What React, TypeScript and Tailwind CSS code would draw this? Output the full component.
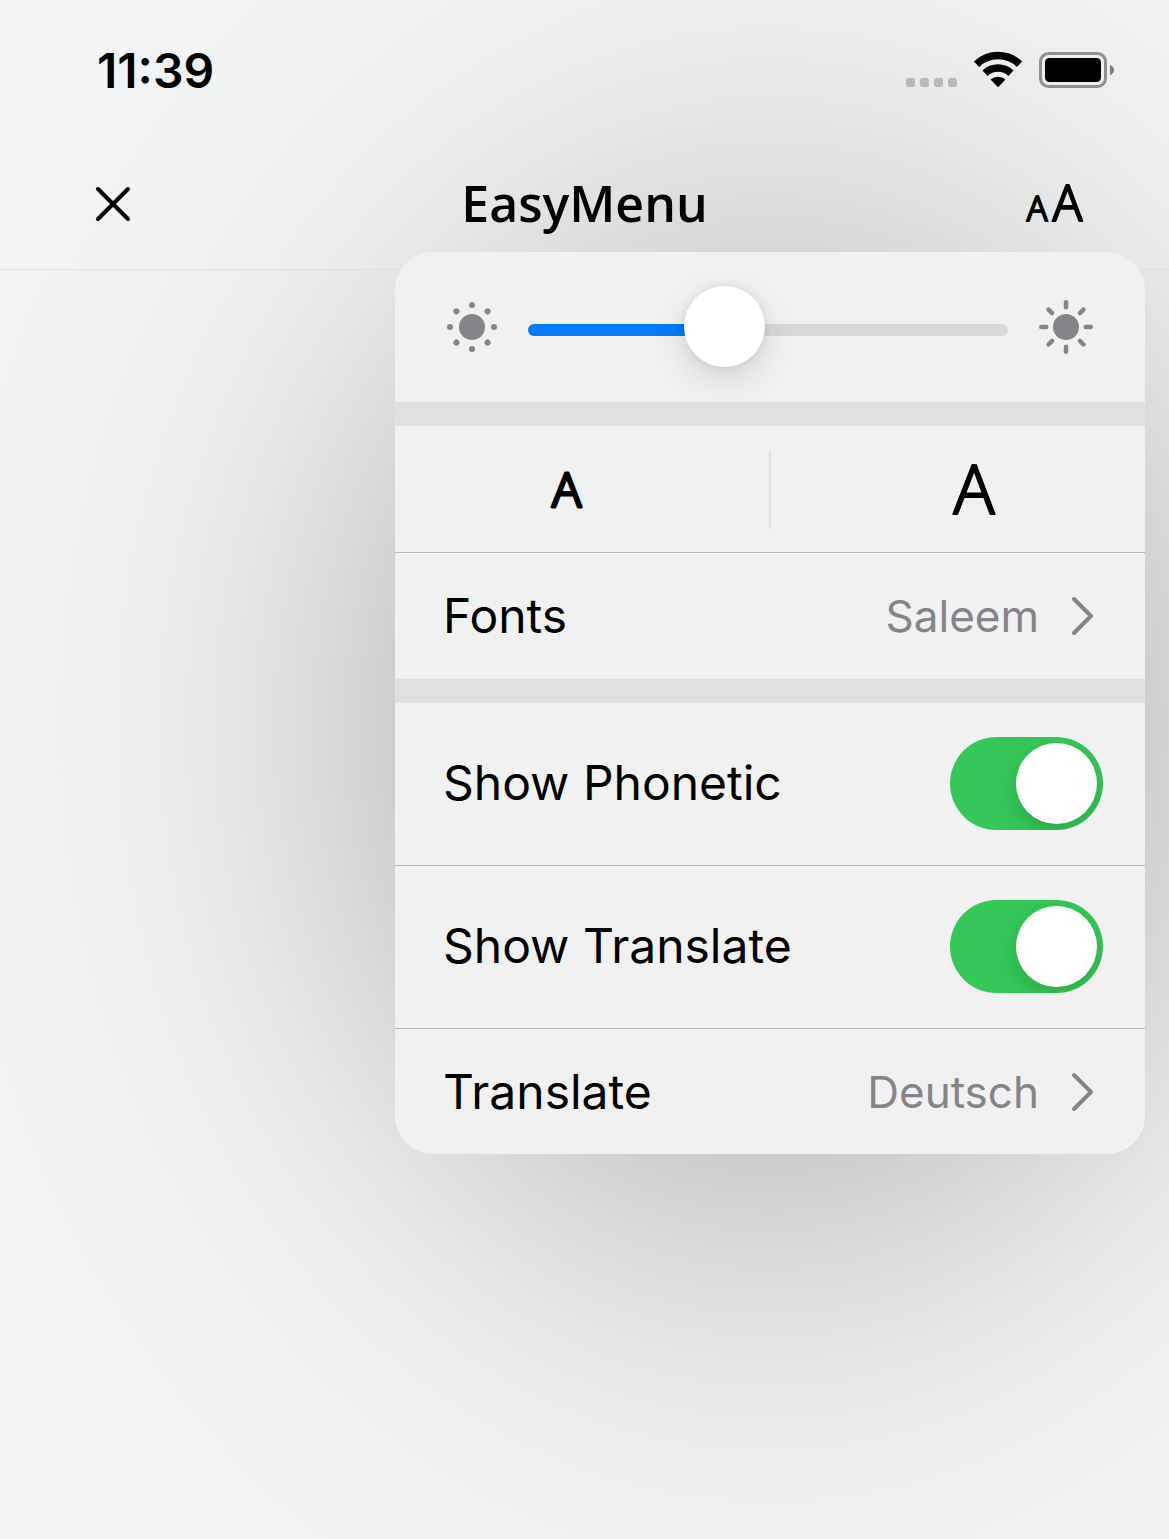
import { useState } from "react";
import type { CSSProperties } from "react";

function StatusIcons() {
  return (
    <div className="flex items-center" aria-hidden="true">
      <svg width="210" height="40" viewBox="0 0 210 40">
        <g fill="#b8b9bb">
          <rect x="1" y="28" width="9" height="9" rx="2.5" />
          <rect x="15" y="28" width="9" height="9" rx="2.5" />
          <rect x="29" y="28" width="9" height="9" rx="2.5" />
          <rect x="43" y="28" width="9" height="9" rx="2.5" />
        </g>
        <g fill="none" stroke="#000" strokeWidth="7.500">
          <path d="M71.5 14.2 A31 31 0 0 1 114.500 14.2" />
          <path d="M80 23.200 A19 19 0 0 1 106 23.200" />
        </g>
        <path d="M85.500 29.500 A10 8 0 0 1 100.500 29.500 L94 36.300 Q93 37.300 92 36.300 Z" fill="#000" />
        <rect x="135.500" y="3.500" width="65" height="33" rx="8" fill="none" stroke="#8f8f91" strokeWidth="3" />
        <rect x="140" y="8" width="56" height="24" rx="4.500" fill="#000" />
        <path d="M205 15 Q209 16.500 209 20 Q209 23.500 205 25 Z" fill="#7d7d7f" />
      </svg>
    </div>
  );
}

const RAY_ANGLES = [0, 45, 90, 135, 180, 225, 270, 315];

function DimSun() {
  return (
    <svg className="shrink-0" width="56" height="56" viewBox="-28 -28 56 56" fill="#858489" aria-hidden="true">
      <circle r="13" />
      {RAY_ANGLES.map((a) => (
        <circle key={a} cy="-22" r="3" transform={`rotate(${a})`} />
      ))}
    </svg>
  );
}

function BrightSun() {
  return (
    <svg className="shrink-0" width="56" height="56" viewBox="-28 -28 56 56" fill="#858489" aria-hidden="true">
      <circle r="13" />
      {RAY_ANGLES.map((a) => (
        <rect key={a} x="-2.200" y="-27" width="4.400" height="9.500" rx="2.200" transform={`rotate(${a})`} />
      ))}
    </svg>
  );
}

function Chevron() {
  return (
    <svg className="shrink-0" width="24" height="40" viewBox="0 0 24 40" fill="none" stroke="#858489" strokeWidth="4" strokeLinecap="round" strokeLinejoin="round" aria-hidden="true">
      <path d="M3 3 L20 20 L3 37" />
    </svg>
  );
}

/* A letter with softened corners; the box spans from cap height to baseline. */
function SizeLetter({ size, stroke }: { size: number; stroke: number }) {
  const width = Math.round(size * 0.64);
  const height = Math.round(size * 0.72);
  return (
    <svg className="overflow-visible" width={width} height={height} viewBox={`0 0 ${width} ${height}`} aria-hidden="true">
      <text
        x={width / 2}
        y={height}
        textAnchor="middle"
        fontFamily="'Noto Sans', sans-serif"
        fontWeight="300"
        fontSize={size}
        stroke="#000"
        strokeWidth={stroke}
        strokeLinejoin="round"
      >
        A
      </text>
    </svg>
  );
}

function Toggle({ id, label, checked, onChange }: { id: string; label: string; checked: boolean; onChange: (v: boolean) => void }) {
  return (
    <div className="flex h-[163px] items-center justify-between border-b border-[#b9b9bd] pr-[42px] pb-0.5 pl-12">
      <label htmlFor={id} className="text-[48px]">
        {label}
      </label>
      <input
        id={id}
        type="checkbox"
        role="switch"
        checked={checked}
        onChange={(e) => onChange(e.target.checked)}
        className="h-[93px] w-[153px] shrink-0 cursor-pointer appearance-none overflow-hidden rounded-full bg-[#d9d9dc] p-1.5 before:block before:size-[81px] before:rounded-full before:bg-white before:shadow-[0_8px_22px_rgba(0,0,0,0.16)] checked:bg-[#35c759] checked:before:ml-auto"
      />
    </div>
  );
}

function LinkRow({ label, value, className }: { label: string; value: string; className: string }) {
  return (
    <button type="button" className={`flex w-full items-center justify-between pr-[50px] pl-12 text-left ${className}`}>
      <span className="text-[48px]">{label}</span>
      <span className="flex items-center gap-8">
        <span className="text-[44px] text-[#858489]">{value}</span>
        <Chevron />
      </span>
    </button>
  );
}

export default function App() {
  const [brightness, setBrightness] = useState(39);
  const [phonetic, setPhonetic] = useState(true);
  const [translate, setTranslate] = useState(true);
  const fill = { "--fill": `calc(40px + (100% - 81px) * ${brightness / 100})` } as CSSProperties;

  return (
    <div className="relative min-h-screen overflow-hidden bg-[#f4f5f7] bg-[radial-gradient(800px_950px_at_calc(100%-399px)_725px,#c9c9ca_43%,#cfcfd0_47%,#dadbdc_57%,#e6e6e7_68%,#ecedee_78%,#f0f1f2_90%,#f4f5f7_115%)] font-['Inter',sans-serif] text-black">
      <header className="border-b border-[#d9dadc]/70 bg-[#f4f5f7]/15">
        <div className="flex h-[138px] items-center justify-between pt-0.5 pr-[54px] pl-[97px]">
          <time className="pt-0.5 text-[48px] font-semibold">11:39</time>
          <StatusIcons />
        </div>
        <div className="grid h-[131px] grid-cols-[1fr_auto_1fr] items-center px-[86px]">
          <button type="button" aria-label="Close" className="justify-self-start pl-[9px]">
            <svg width="36" height="36" viewBox="0 0 36 36" fill="none" stroke="#000" strokeWidth="4" strokeLinecap="round">
              <path d="M3 3 L33 33 M33 3 L3 33" />
            </svg>
          </button>
          <h1 className="font-['Open_Sans',sans-serif] text-[50px] font-semibold">EasyMenu</h1>
          <button type="button" aria-label="Text settings" className="flex items-end gap-1 justify-self-end">
            <SizeLetter size={34} stroke={2} />
            <SizeLetter size={49} stroke={2} />
          </button>
        </div>
      </header>

      <section aria-label="Reading settings" className="absolute top-[252px] right-6 w-[750px] overflow-hidden rounded-[38px] bg-[#f1f1f2]">
        <div className="flex h-[150px] items-center gap-7 px-[49px]">
          <DimSun />
          <input
            type="range"
            aria-label="Brightness"
            min={0}
            max={100}
            value={brightness}
            onChange={(e) => setBrightness(Number(e.target.value))}
            style={fill}
            className="mt-1.5 mr-0.5 h-3 min-w-0 flex-1 cursor-pointer appearance-none rounded-full bg-[linear-gradient(to_right,#007aff_var(--fill),#d8d8db_var(--fill))] [&::-webkit-slider-thumb]:relative [&::-webkit-slider-thumb]:-top-1 [&::-webkit-slider-thumb]:size-[81px] [&::-webkit-slider-thumb]:appearance-none [&::-webkit-slider-thumb]:rounded-full [&::-webkit-slider-thumb]:bg-white [&::-webkit-slider-thumb]:shadow-[0_12px_36px_rgba(0,0,0,0.12),0_1px_10px_rgba(0,0,0,0.1)]"
          />
          <div className="-mr-0.5 pr-1">
            <BrightSun />
          </div>
        </div>
        <div className="h-6 bg-[#e0e0e0]" />
        <div className="flex h-[127px] items-center border-b border-[#b9b9bd]">
          <button type="button" aria-label="Smaller text" className="flex flex-1 items-center justify-center pr-8">
            <SizeLetter size={48} stroke={3} />
          </button>
          <div className="h-[79px] w-0.5 bg-[#e0e0e1]" />
          <button type="button" aria-label="Larger text" className="flex flex-1 items-center justify-center pl-8">
            <SizeLetter size={68} stroke={2} />
          </button>
        </div>
        <LinkRow label="Fonts" value="Saleem" className="h-[126px]" />
        <div className="h-6 bg-[#e0e0e0]" />
        <Toggle id="phonetic" label="Show Phonetic" checked={phonetic} onChange={setPhonetic} />
        <Toggle id="translate" label="Show Translate" checked={translate} onChange={setTranslate} />
        <LinkRow label="Translate" value="Deutsch" className="h-[125px]" />
      </section>
    </div>
  );
}
